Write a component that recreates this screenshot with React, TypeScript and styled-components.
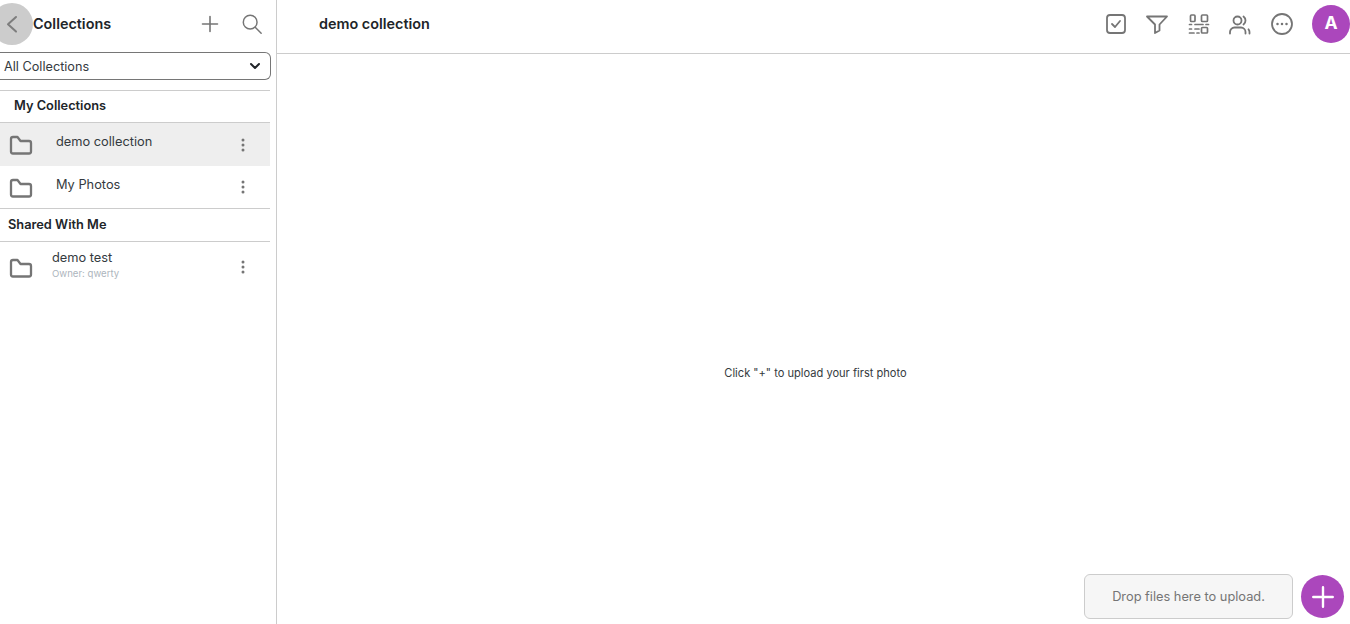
import * as React from "react";
import styled, { createGlobalStyle } from "styled-components";

const GlobalStyle = createGlobalStyle`
  html, body {
    margin: 0;
    padding: 0;
    height: 100%;
    background: #fff;
    font-family: "Inter", "Liberation Sans", sans-serif;
    color: #212529;
    overflow: hidden;
  }
`;

const Page = styled.div`
  display: flex;
  width: 1350px;
  height: 624px;
  overflow: hidden;
`;

const Sidebar = styled.aside`
  width: 270px;
  flex: none;
  border-right: 1px solid #ccc;
  padding-right: 6px;
`;

const SideHeader = styled.div`
  height: 52px;
  display: flex;
  align-items: center;
`;

const BackButton = styled.div`
  width: 42px;
  height: 42px;
  margin-left: -9px;
  margin-top: -4px;
  border-radius: 50%;
  background: #ccc;
  color: #7d7d7d;
  display: flex;
  align-items: center;
  justify-content: center;
  flex: none;
`;

const SideTitle = styled.div`
  font-size: 14.4px;
  font-weight: 600;
  flex: 1;
  margin-top: -6px;
`;

const SideActions = styled.div`
  display: flex;
  align-items: center;
  gap: 19px;
  margin-right: 7px;
  margin-top: -4px;
  color: #757575;
`;

const Select = styled.div`
  height: 28px;
  width: 271px;
  box-sizing: border-box;
  border: 1px solid #767676;
  border-left: none;
  border-radius: 0 6px 6px 0;
  display: flex;
  align-items: center;
  justify-content: space-between;
  padding: 0 9px 0 4px;
  font-size: 12.7px;
  color: #343a40;
`;

const SectionTitle = styled.div<{ $indent: number; $height: number; $top?: number }>`
  height: ${(p) => p.$height}px;
  margin-top: ${(p) => p.$top ?? 0}px;
  border-top: 1px solid #ccc;
  border-bottom: 1px solid #ccc;
  display: flex;
  align-items: center;
  padding: 0 0 2px ${(p) => p.$indent}px;
  box-sizing: content-box;
  font-size: 12.8px;
  font-weight: 600;
`;

const Row = styled.div<{ $active?: boolean; $textLeft: number; $height: number }>`
  height: ${(p) => p.$height}px;
  background: ${(p) => (p.$active ? "#eee" : "transparent")};
  display: grid;
  grid-template-columns: ${(p) => p.$textLeft}px 1fr 54px;
  align-items: center;
`;

const FolderCell = styled.div`
  display: flex;
  padding-left: 9px;
  color: #757575;
  padding-top: 1px;
`;

const RowText = styled.div<{ $lift: number }>`
  font-size: 12.8px;
  color: #343a40;
  margin-top: -${(p) => p.$lift}px;
`;

const Owner = styled.div`
  font-size: 9.6px;
  color: #adb5bd;
  margin-top: 3px;
`;

const Dots = styled.div`
  display: flex;
  color: #757575;
  padding-left: 25px;
`;

const Main = styled.main`
  flex: 1;
  display: flex;
  flex-direction: column;
  min-width: 0;
`;

const TopBar = styled.header`
  height: 53px;
  border-bottom: 1px solid #ccc;
  display: flex;
  align-items: center;
  justify-content: space-between;
  padding-left: 42px;
  flex: none;
`;

const CollectionName = styled.div`
  font-size: 14.4px;
  font-weight: 600;
  margin-top: -7px;
`;

const Tools = styled.div`
  display: flex;
  align-items: center;
  gap: 17.5px;
  color: #757575;
  margin-top: -5px;
`;

const Avatar = styled.div`
  width: 38px;
  height: 38px;
  border-radius: 50%;
  background: #ab47bc;
  color: #fff;
  font-size: 17.6px;
  font-weight: 700;
  display: flex;
  align-items: center;
  justify-content: center;
  flex: none;
  box-sizing: border-box;
  padding-bottom: 3px;
  margin-left: 1px;
`;

const Content = styled.div`
  flex: 1;
  display: flex;
  flex-direction: column;
`;

const Empty = styled.div`
  flex: 1;
  display: flex;
  align-items: center;
  justify-content: center;
  font-size: 11.1px;
  color: #343a40;
  padding: 118px 0 0 4px;
`;

const UploadBar = styled.div`
  display: flex;
  justify-content: flex-end;
  align-items: center;
  gap: 8px;
  padding: 0 6px 5px 0;
`;

const DropZone = styled.div`
  width: 209px;
  height: 45px;
  box-sizing: border-box;
  border: 1px solid #ccc;
  border-radius: 6px;
  background: #f6f6f6;
  color: #757575;
  font-size: 12.8px;
  display: flex;
  align-items: center;
  justify-content: center;
`;

const AddButton = styled.div`
  width: 43px;
  height: 43px;
  border-radius: 50%;
  background: #ab47bc;
  color: #fff;
  display: flex;
  align-items: center;
  justify-content: center;
`;

const Icon = ({ size, sw = 1.8, children }: { size: number; sw?: number; children: React.ReactNode }) => (
  <svg width={size} height={size} viewBox="0 0 24 24" fill="none" stroke="currentColor" strokeWidth={sw} strokeLinecap="round" strokeLinejoin="round">
    {children}
  </svg>
);

const Folder = () => (
  <Icon size={24} sw={2.3}>
    <path d="M4 20.500a2 2 0 0 1-2-2V6a2 2 0 0 1 2-2h4.500l3 4H20a2 2 0 0 1 2 2v8.500a2 2 0 0 1-2 2z" />
  </Icon>
);

const More = () => (
  <svg width="4" height="16" viewBox="0 0 4 16" fill="currentColor">
    <circle cx="2" cy="3" r="1.500" />
    <circle cx="2" cy="8" r="1.500" />
    <circle cx="2" cy="13" r="1.500" />
  </svg>
);

const App = () => (
  <Page>
    <GlobalStyle />
    <Sidebar>
      <SideHeader>
        <BackButton>
          <Icon size={24} sw={2}>
            <path d="M16 5l-8 7.300 8 7.300" />
          </Icon>
        </BackButton>
        <SideTitle>Collections</SideTitle>
        <SideActions>
          <Icon size={24} sw={1.6}>
            <path d="M12 4.500v15M4.500 12h15" />
          </Icon>
          <Icon size={22} sw={1.6}>
            <circle cx="10" cy="10" r="7.500" />
            <path d="M15.500 15.500l6.500 6.500" />
          </Icon>
        </SideActions>
      </SideHeader>
      <Select>
        All Collections
        <svg width="12" height="12" viewBox="0 0 12 12" fill="none" stroke="#212529" strokeWidth="2" strokeLinecap="round" strokeLinejoin="round">
          <path d="M2 4l4 4 4-4" />
        </svg>
      </Select>
      <SectionTitle $indent={14} $height={29} $top={10}>My Collections</SectionTitle>
      <Row $active $textLeft={56} $height={43}>
        <FolderCell><Folder /></FolderCell>
        <RowText $lift={7}>demo collection</RowText>
        <Dots><More /></Dots>
      </Row>
      <Row $textLeft={56} $height={42}>
        <FolderCell><Folder /></FolderCell>
        <RowText $lift={5}>My Photos</RowText>
        <Dots><More /></Dots>
      </Row>
      <SectionTitle $indent={8} $height={30}>Shared With Me</SectionTitle>
      <Row $textLeft={52} $height={50}>
        <FolderCell><Folder /></FolderCell>
        <RowText $lift={6}>
          demo test
          <Owner>Owner: qwerty</Owner>
        </RowText>
        <Dots><More /></Dots>
      </Row>
    </Sidebar>
    <Main>
      <TopBar>
        <CollectionName>demo collection</CollectionName>
        <Tools>
          <Icon size={24}>
            <rect x="3" y="3" width="18" height="18" rx="3" />
            <path d="M8 12l3 3 5-6" />
          </Icon>
          <Icon size={24}>
            <path d="M2 4.500h20l-7.500 8v6l-4.500 2.500v-8.500z" />
          </Icon>
          <Icon size={24} sw={1.7}>
            <rect x="3.500" y="3" width="4.500" height="6.500" rx="1" />
            <rect x="14.500" y="3" width="6" height="6.500" rx="1" />
            <rect x="14.500" y="15.500" width="6" height="5.500" rx="1" />
            <path d="M2.500 12.500h2M8 12.500h8M19 12.500h2.500M2.500 17h2M8 17h4M2.500 21h4.500M10 21h2" />
          </Icon>
          <Icon size={24}>
            <circle cx="9.500" cy="8.500" r="4" />
            <path d="M2 21.500V20a4.500 4.500 0 0 1 4.500-4.500h6.500A4.500 4.500 0 0 1 17.500 20v1.500M15.500 4.500a5 5 0 0 1 0 8M21.500 21.500V20a4 4 0 0 0-1-2.700" />
          </Icon>
          <Icon size={24}>
            <circle cx="12" cy="12" r="10" />
            <path d="M7.500 12h.01M12 12h.01M16.500 12h.01" strokeWidth="2.500" />
          </Icon>
          <Avatar>A</Avatar>
        </Tools>
      </TopBar>
      <Content>
        <Empty>Click "+" to upload your first photo</Empty>
        <UploadBar>
          <DropZone>Drop files here to upload.</DropZone>
          <AddButton>
            <Icon size={26} sw={2.2}>
              <path d="M12 3v18M3 12h18" />
            </Icon>
          </AddButton>
        </UploadBar>
      </Content>
    </Main>
  </Page>
);

export default App;
